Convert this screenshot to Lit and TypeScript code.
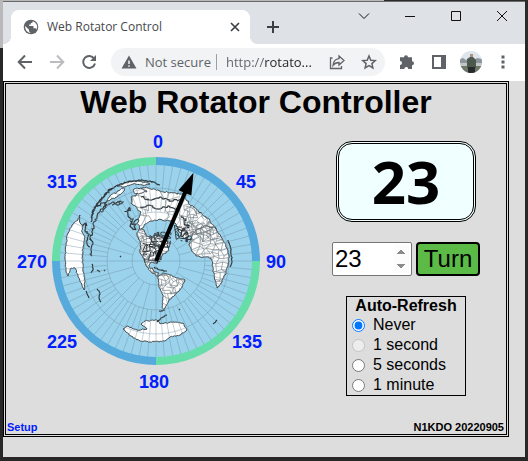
import { LitElement, html, svg, css } from "lit";
import { customElement, state } from "lit/decorators.js";

type Pt = [number, number];

const CX = 156;
const CY = 261;

/* Small deterministic noise source, so coastlines look the same on every load. */
function noise(seed: number) {
  let s = seed;
  return () => {
    s = (s * 16807) % 2147483647;
    return s / 2147483647 - 0.5;
  };
}

/* Turns a coarse outline into a ragged coastline. */
function coast(text: string, amp: number, closed = true): string {
  const pts = text.split(" ").map((p) => p.split(",").map(Number) as Pt);
  const rnd = noise(pts.length * 7919 + Math.round(pts[0][0] * 31));
  const out: string[] = [];
  const last = closed ? pts.length : pts.length - 1;
  for (let i = 0; i < last; i++) {
    const a = pts[i];
    const b = pts[(i + 1) % pts.length];
    const steps = Math.max(1, Math.round(Math.hypot(b[0] - a[0], b[1] - a[1]) / 1.5));
    for (let k = 0; k < steps; k++) {
      const t = k / steps;
      const j = k === 0 ? 0 : amp;
      out.push(
        `${(a[0] + (b[0] - a[0]) * t + rnd() * j).toFixed(1)},${(a[1] + (b[1] - a[1]) * t + rnd() * j).toFixed(1)}`
      );
    }
  }
  if (!closed) out.push(pts[pts.length - 1].join(","));
  return "M" + out.join("L") + (closed ? "Z" : "");
}

/* Irregular web of borders inside a box. */
function web(x: number, y: number, w: number, h: number, step: number, seed: number, gap = 0.2): string {
  const rnd = noise(seed);
  const cols = Math.ceil(w / step);
  const rows = Math.ceil(h / step);
  const grid: Pt[][] = [];
  for (let r = 0; r <= rows; r++) {
    const line: Pt[] = [];
    for (let c = 0; c <= cols; c++) {
      line.push([x + c * step + rnd() * step * 1.1, y + r * step + rnd() * step * 1.1]);
    }
    grid.push(line);
  }
  let d = "";
  for (let r = 0; r <= rows; r++) {
    for (let c = 0; c <= cols; c++) {
      const p = grid[r][c];
      const q = grid[r][c + 1];
      const u = grid[r + 1]?.[c];
      if (q && rnd() > gap - 0.5) d += `M${p[0].toFixed(1)},${p[1].toFixed(1)}L${q[0].toFixed(1)},${q[1].toFixed(1)}`;
      if (u && rnd() > gap - 0.5) d += `M${p[0].toFixed(1)},${p[1].toFixed(1)}L${u[0].toFixed(1)},${u[1].toFixed(1)}`;
    }
  }
  return d;
}

function spokes(): string {
  let d = "";
  for (let a = 0; a < 360; a += 5) {
    const from = a % 15 === 0 ? 24 : 49;
    const s = Math.sin((a * Math.PI) / 180);
    const c = Math.cos((a * Math.PI) / 180);
    d += `M${(CX + s * from).toFixed(1)},${(CY - c * from).toFixed(1)}L${(CX + s * 97).toFixed(1)},${(CY - c * 97).toFixed(1)}`;
  }
  return d + "M132,261H180M156,237V285";
}

const LAND = [
  // Australia
  coast("80,215 78,220 72,225 68,233 66,243 65,260 66,271 68,276 71,268 75,268 78,275 82,285 84,290 85,282 83,268 82,255 83,247 85,237 82,232 83,226 80,223", 1.2),
  // Asia
  coast("131,197 136,196 141,188 148,188 160,191 169,193 183,194 187,201 194,207 202,214 210,221 216,229 219,238 220,246 214,240 206,236 196,238 189,236 184,239 179,232 175,223 167,220 158,220 150,221 144,226 139,231 138,222 141,212 136,207 131,203", 2),
  // Europe and Africa
  coast("196,230 206,226 215,228 222,238 227,248 229,256 228,266 225,275 221,283 217,288 215,280 213,268 211,258 204,257 197,256 192,251 189,244 192,236", 1.4),
  // North America
  coast("139,229 144,230 146,236 152,238 158,233 163,238 170,243 169,250 162,256 158,260 157,264 151,262 149,265 153,270 159,273 158,276 152,273 147,267 143,258 140,251 140,242 137,235", 1.8),
  // South America
  coast("158,277 163,273 170,275 177,278 185,280 182,287 175,295 169,300 165,308 164,311 162,307 163,295 159,287", 1),
  // Antarctica
  coast("123,329 127,326 137,330 147,329 141,324 145,321 157,320 160,324 173,322 183,323 187,330 180,335 170,337 165,341 150,342 140,341 131,336", 1),
  // Islands of south-east Asia
  coast("106,203 110,196 117,192 124,188 123,192 117,197 111,199", 1.8),
  coast("133,190 137,188 142,189 147,191 142,193 136,194", 1.4),
  coast("117,186 124,183 133,181 142,182 150,184 142,185 133,184 124,187", 1.4)
];

const SHORES = [
  coast("91,222 92,216 95,208 101,199 108,191 116,186 127,182 139,180 150,181 160,185", 1.6, false),
  coast("92,218 93,210 99,202 105,195 113,188", 1.8, false),
  coast("92,256 91,250 93,244 90,238 94,226 97,216 101,209 105,204", 3, false),
  coast("98,206 103,203 107,205 101,212", 2.4, false),
  coast("108,204 113,202 118,205 123,202 120,201 112,205", 2, false),
  coast("125,212 130,208 128,216 133,219 130,226 136,230 134,222 138,219", 3, false),
  coast("83,226 86,223 85,230 89,234 87,243 90,247", 2, false),
  coast("86,291 89,298", 1, false),
  coast("97,289 100,294 99,298 101,302", 1.2, false),
  coast("92,264 93,270 91,273", 1, false),
  coast("97,270 100,272", 1, false),
  coast("104,270 105,271", 1, false),
  coast("120,256 121,257", 1, false),
  coast("154,267 160,270 167,271", 1.4, false),
  coast("157,322 161,318 167,315", 1, false),
  coast("213,324 217,320", 1, false),
  coast("228,240 231,249 232,262 230,267", 1, false),
  coast("159,311 163,311", 1, false),
  coast("179,309 180,310", 1, false),
  coast("178,231 184,228 181,236 188,232 186,240 191,238", 3, false),
  coast("181,216 186,219 184,225 190,226", 3, false),
  coast("141,197 150,200 160,197 171,201 182,199", 2, false),
  coast("140,207 149,205 156,209 168,206 178,210", 2, false)
];

/* Tightly broken coasts of the Arctic islands and the Great Lakes. */
const ARCTIC = web(150, 233, 20, 14, 2, 91, 0.45) + web(144, 244, 16, 16, 3, 17, 0.4) + web(176, 226, 12, 14, 3, 63, 0.5);
const BORDERS =
  web(134, 190, 60, 44, 9, 5, 0.5) +
  web(186, 204, 40, 34, 4, 29) +
  web(188, 224, 44, 66, 5, 77, 0.1) +
  web(138, 230, 30, 45, 3, 41, 0.1) +
  web(156, 272, 30, 20, 4, 12) +
  web(158, 290, 20, 20, 7, 13);

const MARKS: [string, number, number][] = [
  ["0", 158, 148],
  ["45", 246, 188],
  ["90", 276, 268],
  ["135", 247, 348],
  ["180", 154, 388],
  ["225", 62, 348],
  ["270", 32, 268],
  ["315", 62, 188]
];

@customElement("rotator-dial")
class RotatorDial extends LitElement {
  static properties = { heading: { type: Number } };
  declare heading: number;

  static styles = css`
    :host { display: block; }
    svg { display: block; width: 100%; max-width: 284px; margin: 0 auto; }
    .mark { font: bold 18px "Liberation Sans", Arial, sans-serif; fill: #0020ff; text-anchor: middle; }
    .sea { fill: #9bd3ec; }
    .blue { stroke: #56abdc; }
    .green { stroke: #67dda9; }
    .rim { fill: none; stroke-width: 8; }
    .grid { fill: none; stroke: #6f8fa2; stroke-opacity: 0.42; stroke-width: 1; }
    .land { fill: #fff; stroke: #33393c; stroke-width: 0.9; }
    .shore { fill: none; stroke: #33393c; stroke-width: 1.2; }
    .border { fill: none; stroke: #6c7377; stroke-width: 0.6; }
    .arctic { fill: none; stroke: #333a3e; stroke-width: 1; }
    .arrow { stroke: #000; stroke-width: 4; }
  `;

  render() {
    return html`<svg viewBox="14 130 284 264" role="img" aria-label="Azimuth map">
      <defs><clipPath id="land">${LAND.map((d) => svg`<path d=${d} />`)}</clipPath></defs>
      <circle class="sea" cx=${CX} cy=${CY} r="98" />
      ${LAND.map((d) => svg`<path class="land" d=${d} />`)}
      <path class="border" clip-path="url(#land)" d=${BORDERS} />
      ${SHORES.map((d) => svg`<path class="shore" d=${d} />`)}
      <path class="arctic" d=${ARCTIC} />
      <path class="grid" d=${spokes()} />
      ${[24, 49, 73].map((r) => svg`<circle class="grid" cx=${CX} cy=${CY} r=${r} />`)}
      <path class="rim blue" d="M156,161A100,100 0 0 1 256,261" />
      <path class="rim green" d="M256,261A100,100 0 0 1 156,361" />
      <path class="rim blue" d="M156,361A100,100 0 0 1 56,261" />
      <path class="rim green" d="M56,261A100,100 0 0 1 156,161" />
      <g transform="rotate(${this.heading} ${CX} ${CY})">
        <path class="arrow" d="M156,261V182" />
        <path d="M156,165L163,187H149Z" />
      </g>
      ${MARKS.map(([t, x, y]) => svg`<text class="mark" x=${x} y=${y}>${t}</text>`)}
    </svg>`;
  }
}

@customElement("browser-chrome")
class BrowserChrome extends LitElement {
  static styles = css`
    :host { display: block; font: 13px/20px "Open Sans", "Noto Sans", sans-serif; color: #5f6368; }
    svg { display: block; fill: none; stroke: #5f6368; stroke-width: 2; }
    button { border: 0; padding: 0; margin: 0; background: none; font: inherit; color: inherit; }
    .strip { display: flex; align-items: flex-start; height: 42px; background: #dee1e6; padding-left: 8px; }
    .tab { position: relative; display: flex; align-items: center; flex: 0 1 239px; box-sizing: border-box; height: 34px; margin-top: 8px; padding: 0 9px 0 12px; gap: 8px; background: #fff; border-radius: 8px 8px 0 0; }
    .tab::before, .tab::after { content: ""; position: absolute; bottom: 0; width: 8px; height: 8px; }
    .tab::before { left: -8px; background: radial-gradient(circle at 0 0, #dee1e6 8px, #fff 8px); }
    .tab::after { right: -8px; background: radial-gradient(circle at 100% 0, #dee1e6 8px, #fff 8px); }
    .title { flex: 1; font-size: 12px; color: #45484c; white-space: nowrap; }
    .plus { margin: 17px 0 0 15px; }
    .spacer { flex: 1; }
    .caption { display: flex; height: 28px; }
    .caption button { display: grid; place-items: center; width: 46px; }
    .thin { stroke: #111; stroke-width: 1; }
    .bar { display: flex; align-items: center; height: 36px; background: #fff; padding: 0 6px; border-bottom: 1px solid #fff; }
    .nav, .tools { display: flex; }
    .nav button, .tools button { display: grid; place-items: center; width: 32px; height: 28px; }
    .omni { flex: 1; display: flex; align-items: center; min-width: 0; height: 28px; margin: 0 6px; border-radius: 14px; background: #f1f3f4; padding-left: 10px; }
    .secure { display: flex; align-items: center; gap: 8px; white-space: nowrap; min-width: 93px; }
    .rule { width: 1px; height: 16px; background: #9aa0a6; margin: 0 9px 0 2px; }
    .url { flex: 1; min-width: 0; border: 0; padding: 0; font: inherit; color: transparent; outline: 0; background: linear-gradient(90deg, #5f6368 39px, #202124 39px); -webkit-background-clip: text; background-clip: text; }
    .solid { fill: #5f6368; stroke: none; }
    .pale { stroke: #babcbe; }
  `;

  render() {
    return html`
      <div class="strip">
        <div class="tab">
          <svg width="16" height="16" viewBox="0 0 16 16"><circle class="solid" cx="8" cy="8" r="7.3" /><path fill="#fff" stroke="none" d="M2.2 7.1 6 10.8V12.2l1.500 1.500V14A6 6 0 0 1 2.200 7.100ZM9.800 2.200C9.800 3.600 9 4 7.800 4v1.400H6.200v1.500h4.300v2.300h1.600c.9 0 1.200.5 1.500 1.300A6 6 0 0 0 9.800 2.200Z" /></svg>
          <span class="title">Web Rotator Control</span>
          <button aria-label="Close tab"><svg width="12" height="12" viewBox="0 0 12 12"><path d="M2 2l8 8M10 2l-8 8" stroke="#3c4043" stroke-width="1.7" /></svg></button>
        </div>
        <button class="plus" aria-label="New tab"><svg width="16" height="16" viewBox="0 0 16 16"><path d="M8 2v12M2 8h12" stroke="#3c4043" /></svg></button>
        <span class="spacer"></span>
        <div class="caption">
          <button aria-label="Search tabs"><svg class="thin" width="12" height="12" viewBox="0 0 12 12"><path d="M1 3.500l5 5 5-5" /></svg></button>
          <button aria-label="Minimize"><svg class="thin" width="12" height="12" viewBox="0 0 12 12"><path d="M1 6.500h10" /></svg></button>
          <button aria-label="Maximize"><svg class="thin" width="12" height="12" viewBox="0 0 12 12"><path d="M1.500 1.500h9v9h-9Z" /></svg></button>
          <button aria-label="Close"><svg class="thin" width="12" height="12" viewBox="0 0 12 12"><path d="M1 1l10 10M11 1L1 11" /></svg></button>
        </div>
      </div>
      <div class="bar">
        <div class="nav">
          <button aria-label="Back"><svg width="16" height="16" viewBox="0 0 16 16"><path d="M15 8H2.500M8 1.500L1.700 8 8 14.500" /></svg></button>
          <button aria-label="Forward"><svg class="pale" width="16" height="16" viewBox="0 0 16 16"><path d="M1 8h12.500M8 1.500L14.300 8 8 14.500" /></svg></button>
          <button aria-label="Reload"><svg width="16" height="16" viewBox="0 0 16 16"><path d="M13.200 4.600A6 6 0 1 0 14 9.500" /><path class="solid" d="M15 1v6H9Z" /></svg></button>
        </div>
        <div class="omni">
          <button class="secure">
            <svg width="16" height="16" viewBox="0 0 16 16"><path class="solid" d="M8 1.500l7.500 13H.5Z" /><path stroke="#f1f3f4" stroke-width="1.500" d="M8 6.500v3.500M8 11.300v1.500" /></svg>
            <span>Not secure</span>
          </button>
          <span class="rule"></span>
          <input class="url" aria-label="Address" .value=${"http://rotato..."} />
          <div class="tools">
            <button aria-label="Share"><svg width="16" height="16" viewBox="0 0 16 16"><path d="M3.500 4H1.500v10.500h11V12" stroke-width="1.300" /><path d="M10 2l5 4.500L10 11V8.500C7.500 8.500 5.500 9.300 4 11.500 4.300 7.500 6.500 5 10 4.600Z" stroke-width="1.300" /></svg></button>
            <button aria-label="Bookmark"><svg width="16" height="16" viewBox="0 0 16 16"><path d="M8 2l1.800 4.200 4.500.4-3.400 3 1 4.400L8 11.700 4.100 14l1-4.400-3.400-3 4.500-.4Z" stroke-width="1.500" /></svg></button>
          </div>
        </div>
        <div class="tools">
          <button aria-label="Extensions"><svg width="16" height="16" viewBox="0 0 16 16"><path class="solid" d="M5 3.300a2 2 0 0 1 4 0h4v4a2 2 0 0 1 0 4V15H9.300a2 2 0 0 0-4 0H1v-4a2 2 0 0 0 0-4V3.300Z" /></svg></button>
          <button aria-label="Side panel"><svg width="14" height="14" viewBox="0 0 14 14"><path d="M1 1h12v12H1Z" /><path class="solid" d="M9 0h5v14H9Z" /></svg></button>
          <button aria-label="Profile"><svg width="22" height="22" viewBox="0 0 22 22"><defs><clipPath id="face"><circle cx="11" cy="11" r="11" /></clipPath></defs><g clip-path="url(#face)" stroke="none"><path fill="#dfe5ec" d="M0 0h22v22H0Z" /><path fill="#8b959b" d="M0 8l3-1 3 2 4-1 4 1 3-2 5 1v5H0Z" /><path fill="#c3c8c6" d="M0 12h22v3H0Z" /><path fill="#6f7768" d="M0 15h22v7H0Z" /><path fill="#4c584b" d="M7 8l3-2h3l3 3v8H7Z" /><path fill="#a99582" d="M10 3h3v3h-3Z" /><path fill="#272b2c" d="M8 16h7v6H8Z" /></g></svg></button>
          <button aria-label="Menu"><svg width="16" height="16" viewBox="0 0 16 16"><path class="solid" d="M6.500 1.500h3v3h-3ZM6.500 6.500h3v3h-3ZM6.500 11.500h3v3h-3Z" /></svg></button>
        </div>
      </div>
    `;
  }
}

@customElement("app-root")
class AppRoot extends LitElement {
  @state() private heading = 23;

  private rates = ["Never", "1 second", "5 seconds", "1 minute"];

  static styles = css`
    :host { display: flex; box-sizing: border-box; min-height: 100vh; padding: 1px 3px 4px; background: linear-gradient(90deg, #b9b9b9 384px, #2b2b2b 384px) 0 0 / 100% 48px no-repeat #272727; font: 16px/20px "Liberation Sans", Arial, sans-serif; color: #000; }
    .window { flex: 1; display: flex; flex-direction: column; min-width: 0; border-top: 1px solid #6a6a6a; background: #ddd; }
    main { flex: 1; display: flex; flex-direction: column; margin: 0 16px 20px 0; border: 3px double #000; }
    h1 { margin: 0 0 10px; text-align: center; font-size: 32px; line-height: 36px; }
    .panel { display: grid; grid-template-columns: 3fr 2fr; }
    .side { display: flex; flex-direction: column; align-items: center; gap: 20px; padding-top: 11px; }
    .readout { box-sizing: border-box; width: 140px; border: 3px double #000; border-radius: 16px; background: #f0ffff; text-align: center; font: bold 60px/75px "Noto Sans", "Open Sans", sans-serif; }
    form { display: flex; gap: 4px; }
    .target, .turn { box-sizing: border-box; height: 34px; font: 24px/28px "Liberation Sans", Arial, sans-serif; margin: 0; }
    .target { width: 80px; border: 1px solid #767676; border-radius: 2px; padding: 1px 2px; background: #fff; }
    .target::-webkit-inner-spin-button { opacity: 1; }
    .turn { width: 64px; border: 2px solid #000; border-radius: 4px; padding: 0; background: #5cba47; color: #000; }
    fieldset { box-sizing: border-box; width: 120px; margin: 0; padding: 0 5px 0; border: 1px solid #000; }
    .caption { float: left; width: 100%; padding: 0; text-align: center; font-weight: bold; line-height: 18px; }
    .rate { clear: both; display: flex; align-items: center; gap: 8px; }
    .rate input { width: 13px; height: 13px; margin: 0; }
    footer { display: flex; justify-content: space-between; margin-top: auto; padding: 0 2px 0 1px; font-weight: bold; font-size: 11px; line-height: 14px; }
    a { color: #0020ff; text-decoration: none; }
  `;

  render() {
    return html`
      <div class="window">
        <browser-chrome></browser-chrome>
        <main>
          <h1>Web Rotator Controller</h1>
          <div class="panel">
            <rotator-dial .heading=${this.heading}></rotator-dial>
            <div class="side">
              <output class="readout">${this.heading}</output>
              <form @submit=${this.turn}>
                <input class="target" type="number" min="0" max="359" aria-label="Heading" .value=${String(this.heading)} />
                <button class="turn">Turn</button>
              </form>
              <fieldset>
                <legend class="caption">Auto-Refresh</legend>
                ${this.rates.map(
                  (rate, i) => html`<label class="rate"
                    ><input type="radio" name="rate" ?checked=${i === 0} ?disabled=${i === 1} />${rate}</label
                  >`
                )}
              </fieldset>
            </div>
          </div>
          <footer><a href="#setup">Setup</a><span>N1KDO 20220905</span></footer>
        </main>
      </div>
    `;
  }

  private turn(e: Event) {
    e.preventDefault();
    const field = this.renderRoot.querySelector<HTMLInputElement>(".target");
    this.heading = Number(field?.value ?? this.heading);
  }
}
